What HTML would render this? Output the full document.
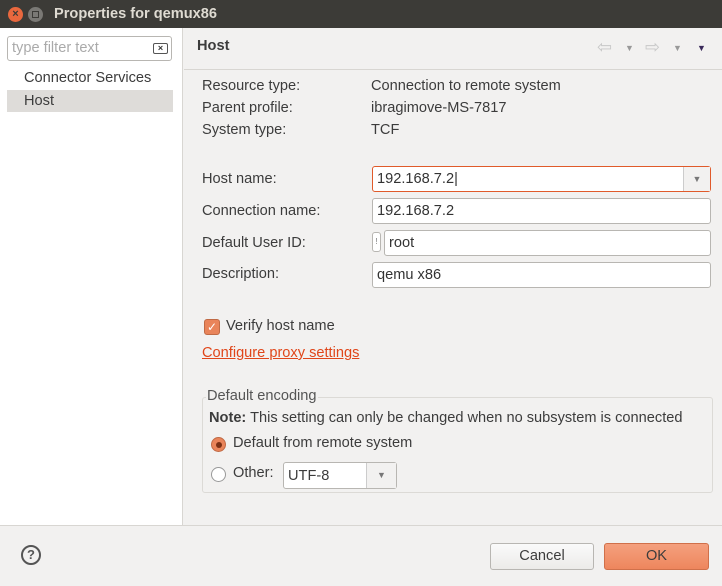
<!DOCTYPE html>
<html><head><style>
*{box-sizing:border-box;margin:0;padding:0}
body{width:722px;height:586px;background:#f2f1f0;font-family:"Liberation Sans","DejaVu Sans",sans-serif;font-size:14.6px;color:#3c3c3c;position:relative;overflow:hidden}
.a{position:absolute;white-space:nowrap}
.inp{position:absolute;background:#fff;border:1px solid #b8b6b2;border-radius:3px;height:26px;padding:4px 4px;font-size:14.6px;color:#333}
</style></head><body>
<div class="a" style="left:0;top:0;width:722px;height:28px;background:#3c3b37"></div>
<div class="a" style="left:8px;top:7px;width:15px;height:15px;border-radius:50%;background:#e9683e;color:#3c3b37;font-size:11px;line-height:15px;text-align:center;font-weight:bold">×</div>
<div class="a" style="left:28px;top:7px;width:15px;height:15px;border-radius:50%;background:#7a7975"><div style="margin:4px;width:7px;height:7px;border:1px solid #3c3b37"></div></div>
<div class="a" style="left:54px;top:6px;color:#dfdbd2;font-size:14.6px;font-weight:bold">Properties for qemux86</div>

<div class="a" style="left:0;top:28px;width:183px;height:497px;background:#fff;border-right:1px solid #d8d6d2"></div>
<div class="a" style="left:7px;top:36px;width:165px;height:25px;border:1px solid #b8b6b2;border-radius:3px;background:#fff"></div>
<div class="a" style="left:12px;top:40px;color:#aaa">type filter text</div>
<div class="a" style="left:153px;top:43px;width:15px;height:11px;border:1.5px solid #555;border-radius:2px;font-size:9px;line-height:8px;text-align:center;font-weight:bold;color:#333">×</div>
<div class="a" style="left:24px;top:70px">Connector Services</div>
<div class="a" style="left:7px;top:90px;width:166px;height:22px;background:#dedcd9"></div>
<div class="a" style="left:24px;top:93px">Host</div>

<div class="a" style="left:197px;top:38px;font-weight:bold">Host</div>
<div class="a" style="left:597px;top:37px;color:#c8c8c8;font-size:18px">⇦</div>
<div class="a" style="left:625px;top:43px;color:#999;font-size:9px">▼</div>
<div class="a" style="left:645px;top:37px;color:#c8c8c8;font-size:18px">⇨</div>
<div class="a" style="left:673px;top:43px;color:#999;font-size:9px">▼</div>
<div class="a" style="left:697px;top:43px;color:#3a2a5a;font-size:9px">▼</div>
<div class="a" style="left:184px;top:69px;width:538px;height:1px;background:#d8d6d2"></div>

<div class="a" style="left:202px;top:78px">Resource type:</div>
<div class="a" style="left:371px;top:78px">Connection to remote system</div>
<div class="a" style="left:202px;top:100px">Parent profile:</div>
<div class="a" style="left:371px;top:100px">ibragimove-MS-7817</div>
<div class="a" style="left:202px;top:122px">System type:</div>
<div class="a" style="left:371px;top:122px">TCF</div>

<div class="a" style="left:202px;top:171px">Host name:</div>
<div class="inp" style="left:372px;top:166px;width:339px;border-color:#e05a2a">192.168.7.2|</div>
<div class="a" style="left:683px;top:167px;width:27px;height:24px;border-left:1px solid #ccc;background:#f2f1f0;color:#777;font-size:9px;text-align:center;line-height:24px">▼</div>
<div class="a" style="left:202px;top:203px">Connection name:</div>
<div class="inp" style="left:372px;top:198px;width:339px">192.168.7.2</div>
<div class="a" style="left:202px;top:235px">Default User ID:</div>
<div class="a" style="left:372px;top:232px;width:9px;height:20px;border:1px solid #b8b6b2;border-radius:3px;background:#fff;font-size:8px;text-align:center;line-height:18px;color:#777">!</div>
<div class="inp" style="left:384px;top:230px;width:327px">root</div>
<div class="a" style="left:202px;top:266px">Description:</div>
<div class="inp" style="left:372px;top:262px;width:339px">qemu x86</div>

<div class="a" style="left:204px;top:319px;width:16px;height:16px;border-radius:3px;background:#e9845a;border:1px solid #c06a45;color:#fff;font-size:12px;line-height:14px;text-align:center">✓</div>
<div class="a" style="left:226px;top:318px">Verify host name</div>
<div class="a" style="left:202px;top:345px;color:#e0461a;text-decoration:underline">Configure proxy settings</div>

<div class="a" style="left:202px;top:397px;width:511px;height:96px;border:1px solid #dcdad6;border-radius:3px"></div>
<div class="a" style="left:206px;top:388px;background:#f2f1f0;padding:0 1px;color:#555">Default encoding</div>
<div class="a" style="left:209px;top:410px"><b>Note:</b> This setting can only be changed when no subsystem is connected</div>
<div class="a" style="left:211px;top:437px;width:15px;height:15px;border-radius:50%;background:#e9845a;border:1px solid #c06a45"><div style="margin:3.5px;width:6px;height:6px;border-radius:50%;background:#7a3015"></div></div>
<div class="a" style="left:233px;top:435px">Default from remote system</div>
<div class="a" style="left:211px;top:467px;width:15px;height:15px;border-radius:50%;background:#fff;border:1px solid #999"></div>
<div class="a" style="left:233px;top:465px">Other:</div>
<div class="a" style="left:283px;top:462px;width:114px;height:27px;border:1px solid #b8b6b2;border-radius:3px;background:#fff;padding:5px 4px">UTF-8</div>
<div class="a" style="left:366px;top:463px;width:30px;height:25px;border-left:1px solid #ccc;background:#f2f1f0;color:#777;font-size:9px;text-align:center;line-height:25px">▼</div>

<div class="a" style="left:0;top:525px;width:722px;height:1px;background:#d8d6d2"></div>
<div class="a" style="left:21px;top:545px;width:20px;height:20px;border-radius:50%;border:2px solid #555;font-weight:bold;text-align:center;line-height:16px;font-size:13px;color:#555">?</div>
<div class="a" style="left:490px;top:543px;width:104px;height:27px;border:1px solid #b8b6b2;border-radius:3px;background:linear-gradient(#fafafa,#ecebe9);text-align:center;line-height:25px">Cancel</div>
<div class="a" style="left:604px;top:543px;width:105px;height:27px;border:1px solid #d0704a;border-radius:3px;background:linear-gradient(#f4a07e,#ee865d);text-align:center;line-height:25px">OK</div>
</body></html>
